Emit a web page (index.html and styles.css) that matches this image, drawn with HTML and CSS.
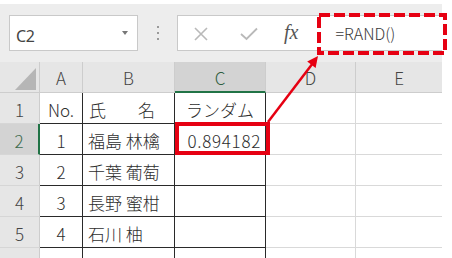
FILE: index.html
```html
<!DOCTYPE html>
<html lang="ja">
<head>
<meta charset="utf-8">
<link rel="stylesheet" href="styles.css">
</head>
<body>
<div class="app">
  <div class="toolbar">
    <div class="namebox">
      <span class="ref">C2</span>
      <span class="caret"></span>
    </div>
    <div class="grip"><i></i><i></i><i></i></div>
    <div class="fbar">
      <svg class="ico x" width="16" height="16" viewBox="0 0 16 16"><path d="M2 2 L14 14 M14 2 L2 14" stroke="#b9b9b9" stroke-width="1.6" fill="none"/></svg>
      <svg class="ico ok" width="18" height="14" viewBox="0 0 18 14"><path d="M1 7 L6.5 12 L17 1.5" stroke="#b9b9b9" stroke-width="1.8" fill="none"/></svg>
      <span class="fx">fx</span>
      <span class="formula">=RAND()</span>
    </div>
  </div>
  <div class="sheet">
    <div class="corner"><span class="tri"></span></div>
    <div class="ch">A</div>
    <div class="ch">B</div>
    <div class="ch sel">C</div>
    <div class="ch">D</div>
    <div class="ch last">E</div>

    <div class="rh">1</div>
    <div class="c t ctr">No.</div>
    <div class="c t name-h"><span>氏</span><span>名</span></div>
    <div class="c t ctr">ランダム</div>
    <div class="c g"></div>
    <div class="c g last"></div>

    <div class="rh sel">2</div>
    <div class="c t ctr">1</div>
    <div class="c t">福島 林檎</div>
    <div class="c t num">0.894182</div>
    <div class="c g"></div>
    <div class="c g last"></div>

    <div class="rh">3</div>
    <div class="c t ctr">2</div>
    <div class="c t">千葉 葡萄</div>
    <div class="c t"></div>
    <div class="c g"></div>
    <div class="c g last"></div>

    <div class="rh">4</div>
    <div class="c t ctr">3</div>
    <div class="c t">長野 蜜柑</div>
    <div class="c t"></div>
    <div class="c g"></div>
    <div class="c g last"></div>

    <div class="rh">5</div>
    <div class="c t ctr">4</div>
    <div class="c t">石川 柚</div>
    <div class="c t"></div>
    <div class="c g"></div>
    <div class="c g last"></div>

    <div class="rh"></div>
    <div class="c t"></div>
    <div class="c t"></div>
    <div class="c t"></div>
    <div class="c g"></div>
    <div class="c g last"></div>
  </div>
  <svg class="annot" width="452" height="258" viewBox="0 0 452 258">
    <rect x="319" y="15" width="126" height="38" fill="none" stroke="#e60012" stroke-width="4" stroke-dasharray="11 4"/>
    <rect x="177" y="124" width="91" height="29" fill="none" stroke="#e60012" stroke-width="4"/>
    <line x1="268" y1="122" x2="313" y2="63" stroke="#e60012" stroke-width="2.5"/>
    <polygon points="318,56 315.6,68 307.2,61.6" fill="#e60012"/>
  </svg>
</div>
</body>
</html>
```
FILE: styles.css
```css
* { box-sizing: border-box; }
html, body { margin: 0; padding: 0; background: #ffffff; }
body { width: 452px; height: 258px; overflow: hidden; font-family: "Noto Sans CJK JP", "Noto Sans", sans-serif; }
.app { position: relative; width: 452px; height: 258px; overflow: hidden; }

.toolbar {
  margin-top: 4px;
  width: 442px;
  height: 58px;
  background: #ededed;
  display: flex;
  align-items: flex-start;
  padding: 11px 0 0 9px;
}
.namebox {
  width: 129px;
  height: 36px;
  background: #fff;
  border: 1px solid #c9c9c9;
  display: flex;
  align-items: center;
  justify-content: space-between;
  padding: 6px 9px 0 6px;
}
.ref { font-family: "Noto Sans", sans-serif; font-size: 16px; color: #444; letter-spacing: -0.3px; }
.caret {
  width: 0; height: 0;
  border-left: 3.5px solid transparent;
  border-right: 3.5px solid transparent;
  border-top: 4px solid #777;
  margin-top: -6px;
}
.grip {
  width: 39px;
  height: 36px;
  display: flex;
  flex-direction: column;
  align-items: center;
  justify-content: center;
  gap: 4px;
}
.grip i { display: block; width: 2px; height: 2px; background: #9a9a9a; }
.fbar {
  flex: 1;
  height: 36px;
  background: #fff;
  border: 1px solid #c9c9c9;
  border-right: none;
  display: flex;
  align-items: center;
  padding-left: 15px;
}
.ico.x { margin-top: 1px; }
.ico.ok { margin-left: 31px; margin-top: 2px; }
.fx {
  margin-left: 26px;
  font-family: "Liberation Serif", serif;
  font-style: italic;
  font-size: 20px;
  color: #555;
  margin-top: -2px;
}
.formula {
  margin-left: 37px;
  font-size: 16px;
  font-weight: 300;
  color: #3a3a3a;
  margin-top: -1px;
}

.sheet {
  display: grid;
  grid-template-columns: 40px 43px 92px 91px 90px 86px;
  grid-template-rows: 31px repeat(6, 31px);
  width: 442px;
  font-size: 17px;
  font-weight: 300;
  color: #2e2e2e;
}
.corner {
  background: #e6e6e6;
  border-right: 1px solid #cdcdcd;
  border-bottom: 1px solid #cdcdcd;
  position: relative;
}
.tri {
  position: absolute;
  left: 15px; top: 6px;
  width: 0; height: 0;
  border-left: 21px solid transparent;
  border-bottom: 22px solid #b6b6b6;
}
.ch {
  background: #e6e6e6;
  border-right: 1px solid #cdcdcd;
  border-bottom: 1px solid #cdcdcd;
  display: flex;
  align-items: center;
  justify-content: center;
  color: #444;
  padding-top: 1px;
}
.ch.sel { background: #d3d3d3; border-bottom: 2px solid #217346; color: #2f5d40; }
.ch.last { border-right: none; }
.rh {
  background: #e6e6e6;
  border-right: 1px solid #cdcdcd;
  border-bottom: 1px solid #d6d6d6;
  display: flex;
  align-items: center;
  justify-content: center;
  color: #444;
  padding-top: 2px;
}
.rh.sel { background: #d3d3d3; border-right: 2px solid #217346; color: #3d6b4d; }
.c {
  display: flex;
  align-items: center;
  padding: 3px 5px 0 5px;
  white-space: nowrap;
  overflow: hidden;
}
.c.t { border-right: 1px solid #2a2a2a; border-bottom: 1px solid #2a2a2a; }
.c.g { border-right: 1px solid #d9d9d9; border-bottom: 1px solid #d9d9d9; }
.c.g.last { border-right: none; }
.ctr { justify-content: center; }
.num { justify-content: flex-end; padding-right: 4px; letter-spacing: 0.7px; }
.name-h { justify-content: space-between; padding: 3px 19px 0 6px; }

.annot { position: absolute; left: 0; top: 0; pointer-events: none; }
```
